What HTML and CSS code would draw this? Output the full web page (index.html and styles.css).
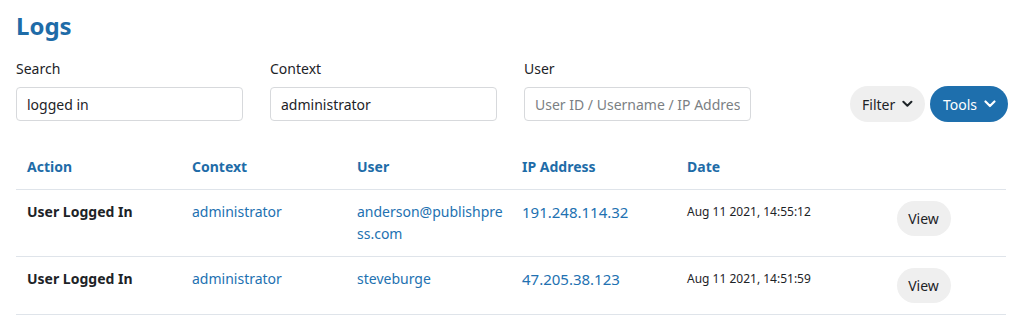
FILE: index.html
```html
<!DOCTYPE html>
<html>
<head>
<meta charset="utf-8">
<link rel="stylesheet" href="styles.css">
</head>
<body>
<div class="page">
  <h1 class="title">Logs</h1>
  <div class="filters">
    <label class="field">
      <span class="field-label">Search</span>
      <input class="field-input" type="text" value="logged in">
    </label>
    <label class="field">
      <span class="field-label">Context</span>
      <input class="field-input" type="text" value="administrator">
    </label>
    <label class="field">
      <span class="field-label">User</span>
      <input class="field-input" type="text" placeholder="User ID / Username / IP Address">
    </label>
    <div class="actions">
      <button class="pill pill-light">Filter <svg class="chev" width="12" height="8" viewBox="0 0 12 8"><path d="M1.5 1.5 L6 6 L10.5 1.5" fill="none" stroke="currentColor" stroke-width="2.2" stroke-linecap="round" stroke-linejoin="round"/></svg></button>
      <button class="pill pill-blue">Tools <svg class="chev" width="12" height="8" viewBox="0 0 12 8"><path d="M1.5 1.5 L6 6 L10.5 1.5" fill="none" stroke="currentColor" stroke-width="2.2" stroke-linecap="round" stroke-linejoin="round"/></svg></button>
    </div>
  </div>
  <table class="logs">
    <thead>
      <tr>
        <th>Action</th>
        <th>Context</th>
        <th>User</th>
        <th>IP Address</th>
        <th>Date</th>
        <th></th>
      </tr>
    </thead>
    <tbody>
      <tr>
        <td class="action">User Logged In</td>
        <td class="link">administrator</td>
        <td class="link wrap">anderson@publishpress.com</td>
        <td class="link ip">191.248.114.32</td>
        <td class="date">Aug 11 2021, 14:55:12</td>
        <td class="btn-cell"><button class="view">View</button></td>
      </tr>
      <tr>
        <td class="action">User Logged In</td>
        <td class="link">administrator</td>
        <td class="link wrap">steveburge</td>
        <td class="link ip">47.205.38.123</td>
        <td class="date">Aug 11 2021, 14:51:59</td>
        <td class="btn-cell"><button class="view">View</button></td>
      </tr>
    </tbody>
  </table>
</div>
</body>
</html>
```
FILE: styles.css
```css
* { box-sizing: border-box; }
html, body { margin: 0; padding: 0; background: #fff; }
body {
  font-family: "Noto Sans", "Liberation Sans", Arial, sans-serif;
  color: #1d2327;
  font-size: 14px;
}
.page { padding: 9px 16px 0 16px; }
.title {
  margin: 0;
  font-size: 24px;
  line-height: 34px;
  font-weight: 700;
  color: #1e6ca8;
}
.filters {
  margin-top: 16px;
  display: flex;
  align-items: flex-end;
  gap: 27px;
}
.field { display: flex; flex-direction: column; width: 227px; }
.field-label { font-size: 14px; line-height: 20px; margin-bottom: 8px; }
.field-input {
  height: 34px;
  border: 1px solid #d7d9dc;
  border-radius: 4px;
  padding: 0 10px;
  font-family: inherit;
  font-size: 14px;
  color: #1d2327;
  background: #fff;
  outline: none;
}
.field-input::placeholder { color: #7b7f84; }
.actions {
  margin-left: auto;
  display: flex;
  gap: 5px;
  margin-bottom: -1px;
}
.pill {
  height: 36px;
  border: none;
  border-radius: 18px;
  padding: 0 12px 0 12px;
  font-family: inherit;
  font-size: 14px;
  display: flex;
  align-items: center;
  gap: 7px;
}
.pill-light { background: #efefef; color: #1d2327; width: 75px; }
.pill-blue { background: #1e6fad; color: #fff; width: 78px; padding-left: 13px; }
.chev { display: block; }
.logs {
  margin-top: 24px;
  width: 990px;
  border-collapse: collapse;
  table-layout: fixed;
}
.logs th, .logs td {
  width: 165px;
  text-align: left;
  vertical-align: top;
  padding: 11px 11px 11px 11px;
  line-height: 22px;
}
.logs th {
  font-weight: 700;
  color: #1e6ca8;
  border-bottom: 1px solid #dfe4ea;
}
.logs td { border-bottom: 1px solid #dfe4ea; }
.logs .action { font-weight: 700; color: #1d2327; }
.logs .link { color: #2271b1; }
.logs .wrap { word-break: break-all; padding-right: 4px; }
.logs .ip { font-size: 15px; }
.logs .date { font-size: 12px; color: #1d2327; }
.logs .btn-cell { text-align: center; }
.view {
  width: 54px;
  height: 35px;
  border: none;
  border-radius: 18px;
  background: #efefef;
  color: #1d2327;
  font-family: inherit;
  font-size: 14px;
  padding: 0;
}
```
